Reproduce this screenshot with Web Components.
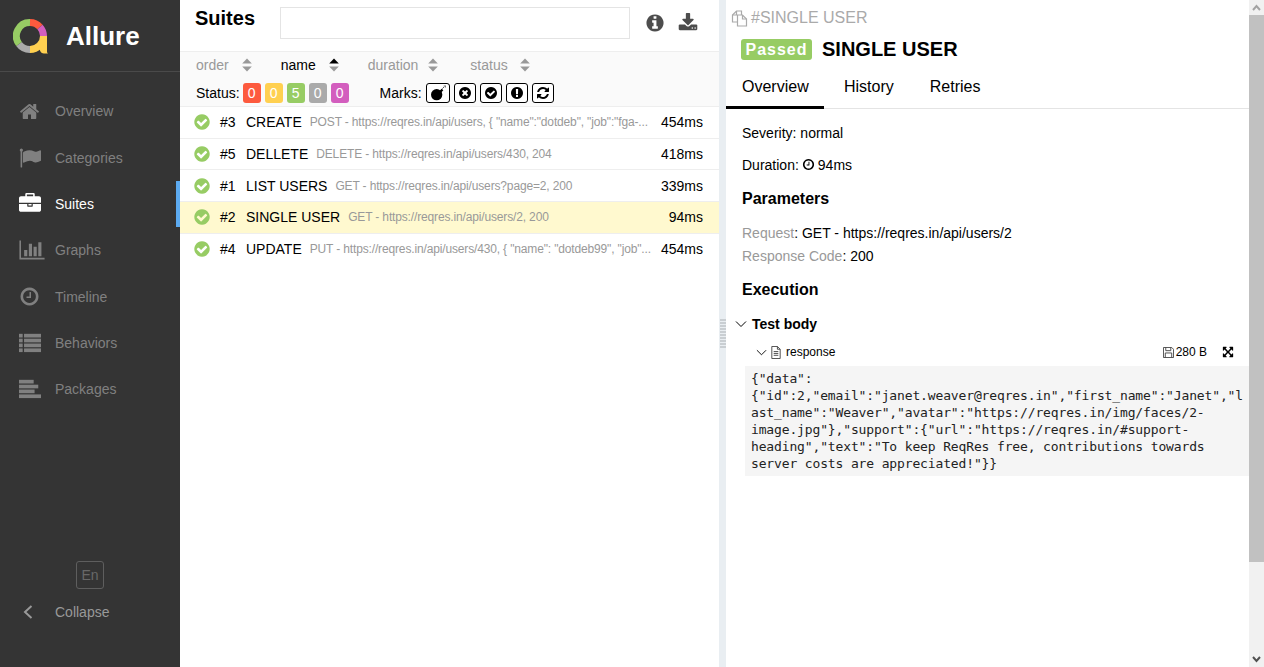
<!DOCTYPE html>
<html lang="en">
<head>
<meta charset="utf-8">
<title>Allure Report</title>
<style>
	html, body { margin: 0; height: 100%; overflow: hidden; }
	body { font-family: "Liberation Sans", Arial, sans-serif; font-size: 14px; color: #000; }
</style>
</head>
<body>
<allure-app>
	<allure-sidebar slot="side"></allure-sidebar>
	<suites-pane slot="tree"></suites-pane>
	<test-pane slot="detail"></test-pane>
</allure-app>

<script>
const RING = 'q0 209-103 385.5t-279.5 279.5-385.5 103-385.5-103-279.5-279.5-103-385.5 103-385.5 279.5-279.5 385.5-103 385.5 103 279.5 279.5 103 385.5z';

const ICONS = {
	home: ['0 0 1792 1792', '<path d="M1472 992v480q0 26-19 45t-45 19h-384v-384h-256v384h-384q-26 0-45-19t-19-45v-480q0-1 .5-3t.5-3l575-474 575 474q1 2 1 6zm223-69l-62 74q-8 9-21 11h-3q-13 0-21-7l-692-577-692 577q-12 8-24 7-13-2-21-11l-62-74q-8-10-7-23.5t11-22.5l719-599q32-26 76-26t76 26l244 204v-195q0-14 9-23t23-9h192q14 0 23 9t9 23v408l219 182q10 8 11 21.5t-7 23.5z"/>'],
	flag: ['0 0 1792 1792', '<path d="M320 256q0 72-64 110v1266q0 13-9.5 22.5t-22.5 9.5h-64q-13 0-22.5-9.5t-9.5-22.5v-1266q-64-38-64-110 0-53 37.5-90.5t90.5-37.5 90.5 37.5 37.5 90.5zm1472 64v763q0 25-12.5 38.5t-39.5 27.5q-215 116-369 116-61 0-123.5-22t-108.5-48-115.5-48-142.5-22q-192 0-464 146-17 9-33 9-26 0-45-19t-19-45v-742q0-32 31-55 21-14 79-43 236-120 421-120 107 0 200 29t219 88q38 19 88 19 54 0 117.5-21t110-47 88-47 54.5-21q26 0 45 19t19 45z"/>'],
	briefcase: ['0 0 1792 1792', '<path d="M640 256h512v-128h-512v128zm1152 640v480q0 66-47 113t-113 47h-1472q-66 0-113-47t-47-113v-480h672v160q0 26 19 45t45 19h320q26 0 45-19t19-45v-160h672zm-768 0v128h-256v-128h256zm768-480v384h-1792v-384q0-66 47-113t113-47h352v-160q0-40 28-68t68-28h576q40 0 68 28t28 68v160h352q66 0 113 47t47 113z"/>'],
	chart: ['0 0 2048 1792', '<path d="M640 896v512h-256v-512h256zm384-512v1024h-256v-1024h256zm1024 1152v128h-2048v-1536h128v1408h1920zm-640-896v768h-256v-768h256zm384-384v1152h-256v-1152h256z"/>'],
	clock: ['0 0 1792 1792', '<path d="M1024 544v448q0 14-9 23t-23 9h-320q-14 0-23-9t-9-23v-64q0-14 9-23t23-9h224v-352q0-14 9-23t23-9h64q14 0 23 9t9 23zm416 352q0-148-73-273t-198-198-273-73-273 73-198 198-73 273 73 273 198 198 273 73 273-73 198-198 73-273zm224 0' + RING + '"/>'],
	list: ['0 0 24 24', '<rect x="0" y="2" width="4" height="4"/><rect x="0" y="7.3" width="4" height="4"/><rect x="0" y="12.6" width="4" height="4"/><rect x="0" y="17.9" width="4" height="4"/><rect x="5.5" y="2" width="18.5" height="4"/><rect x="5.5" y="7.3" width="18.5" height="4"/><rect x="5.5" y="12.6" width="18.5" height="4"/><rect x="5.5" y="17.9" width="18.5" height="4"/>'],
	bars: ['0 0 24 24', '<rect x="0" y="2" width="16" height="4"/><rect x="0" y="7.3" width="21" height="4"/><rect x="0" y="12.6" width="17" height="4"/><rect x="0" y="17.9" width="24" height="4"/>'],
	check: ['0 0 1792 1792', '<path d="M1412 734q0-28-18-46l-91-90q-19-19-45-19t-45 19l-408 407-226-226q-19-19-45-19t-45 19l-91 90q-18 18-18 46 0 27 18 45l362 362q19 19 45 19 27 0 46-19l543-543q18-18 18-45zm252 162' + RING + '"/>'],
	times: ['0 0 1792 1792', '<path d="M1277 1122q0-26-19-45l-181-181 181-181q19-19 19-45 0-27-19-46l-90-90q-19-19-46-19-26 0-45 19l-181 181-181-181q-19-19-45-19-27 0-46 19l-90 90q-19 19-19 46 0 26 19 45l181 181-181 181q-19 19-19 45 0 27 19 46l90 90q19 19 46 19 26 0 45-19l181-181 181 181q19 19 45 19 27 0 46-19l90-90q19-19 19-46zm387-226' + RING + '"/>'],
	exclamation: ['0 0 1792 1792', '<path d="M896 128q209 0 385.5 103t279.5 279.5 103 385.5-103 385.5-279.5 279.5-385.5 103-385.5-103-279.5-279.5-103-385.5 103-385.5 279.5-279.5 385.5-103zm128 1247v-190q0-14-9-23.5t-22-9.5h-192q-13 0-23 10t-10 23v190q0 13 10 23t23 10h192q13 0 22-9.5t9-23.5zm-2-344l18-621q0-12-10-18-10-8-24-8h-220q-14 0-24 8-10 6-10 18l17 621q0 10 10 17.5t24 7.5h185q14 0 23.5-7.5t10.5-17.5z"/>'],
	info: ['0 0 1792 1792', '<path d="M1152 1376v-160q0-14-9-23t-23-9h-96v-512q0-14-9-23t-23-9h-320q-14 0-23 9t-9 23v160q0 14 9 23t23 9h96v320h-96q-14 0-23 9t-9 23v160q0 14 9 23t23 9h448q14 0 23-9t9-23zm-128-896v-160q0-14-9-23t-23-9h-192q-14 0-23 9t-9 23v160q0 14 9 23t23 9h192q14 0 23-9t9-23zm640 416' + RING + '"/>'],
	refresh: ['0 0 1792 1792', '<path d="M1639 1056q0 5-1 7-64 268-268 434.5t-478 166.5q-146 0-282.5-55t-243.5-157l-129 129q-19 19-45 19t-45-19-19-45v-448q0-26 19-45t45-19h448q26 0 45 19t19 45-19 45l-137 137q71 66 161 102t187 36q134 0 250-65t186-179q11-17 53-117 8-23 30-23h192q13 0 22.5 9.5t9.5 22.5zm25-800v448q0 26-19 45t-45 19h-448q-26 0-45-19t-19-45 19-45l138-138q-148-137-349-137-134 0-250 65t-186 179q-11 17-53 117-8 23-30 23h-199q-13 0-22.5-9.5t-9.5-22.5v-7q65-268 270-434.5t480-166.5q146 0 284 55.5t245 156.5l130-129q19-19 45-19t45 19 19 45z"/>'],
	download: ['0 0 1792 1792', '<path d="M1344 1344q0-26-19-45t-45-19-45 19-19 45 19 45 45 19 45-19 19-45zm256 0q0-26-19-45t-45-19-45 19-19 45 19 45 45 19 45-19 19-45zm128-224v320q0 40-28 68t-68 28h-1472q-40 0-68-28t-28-68v-320q0-40 28-68t68-28h465l135 136q58 56 136 56t136-56l136-136h464q40 0 68 28t28 68zm-325-569q17 41-14 70l-448 448q-18 19-45 19t-45-19l-448-448q-31-29-14-70 17-39 59-39h256v-448q0-26 19-45t45-19h256q26 0 45 19t19 45v448h256q42 0 59 39z"/>'],
	expand: ['0 0 1792 1792', '<path d="M1411 541l-355 355 355 355 144-144q29-31 70-14 39 17 39 59v448q0 26-19 45t-45 19h-448q-42 0-59-40-17-39 14-69l144-144-355-355-355 355 144 144q31 30 14 69-17 40-59 40h-448q-26 0-45-19t-19-45v-448q0-42 40-59 39-17 69 14l144 144 355-355-355-355-144 144q-19 19-45 19-12 0-24-5-40-17-40-59v-448q0-26 19-45t45-19h448q42 0 59 40 17 39-14 69l-144 144 355 355 355-355-144-144q-31-30-14-69 17-40 59-40h448q26 0 45 19t19 45v448q0 42-39 59-13 5-25 5-26 0-45-19z"/>'],
	bomb: ['0 0 24 24', '<circle cx="10" cy="14.5" r="8.5"/><path d="M14 9l3.500-3.500 2.500 2.500-3.500 3.500z"/><path d="M18.500 5.500L21 3" fill="none" stroke="currentColor" stroke-width="1"/><path d="M20.500 1.500h3M23 1v3" fill="none" stroke="currentColor" stroke-width=".8"/>'],
	sort: ['0 0 10 14', '<path d="M5 0.500L9.800 5.500H.2z"/><path d="M5 13.500L9.800 8.500H.2z" class="down"/>'],
	chevronDown: ['0 0 12 12', '<path d="M1 3.500L6 8.500L11 3.500" fill="none" stroke="currentColor" stroke-width="1"/>'],
	angleLeft: ['0 0 12 16', '<path d="M9.500 2L3 8L9.500 14" fill="none" stroke="currentColor" stroke-width="2"/>'],
	copy: ['0 0 17 17', '<g fill="none" stroke="currentColor" stroke-width="1.200"><path d="M6.500 12H1.500V5L5.500 1H10.500V5"/><path d="M1.500 5H5.500V1"/><path d="M6.500 5H11.500L15.500 9V16H6.500Z"/><path d="M11.500 5V9H15.500"/></g>'],
	file: ['0 0 12 14', '<g fill="none" stroke="currentColor" stroke-width="1"><path d="M1.500 .5h6l3 3v10h-9z"/><path d="M7.500 .5v3h3"/><path d="M3.500 6h5M3.500 8h5M3.500 10h5"/></g>'],
	save: ['0 0 12 12', '<g fill="none" stroke="currentColor" stroke-width="1"><path d="M.5 .5h9l2 2v9h-11z"/><path d="M3 .5v3.500h5.500V.5"/><path d="M2.500 11.500V6.500h7v5"/></g>']
};

class UxIcon extends HTMLElement {
	constructor() {
		super();
		this.attachShadow({ mode: 'open' });
	}

	connectedCallback() {
		const [box, body] = ICONS[this.getAttribute('name')];
		const size = this.getAttribute('size') || '14';
		const high = this.getAttribute('high') || size;

		this.shadowRoot.innerHTML = `
			<style>
				:host { display: inline-flex; flex: none; color: inherit; line-height: 0; }
				svg { width: ${size}px; height: ${high}px; fill: currentColor; display: block; }
				.down { fill: var(--sort-down, currentColor); }
			</style>
			<svg viewBox="${box}" preserveAspectRatio="xMidYMid meet">${body}</svg>
		`;
	}
}

class AllureLogo extends HTMLElement {
	constructor() {
		super();
		this.attachShadow({ mode: 'open' });
		this.shadowRoot.innerHTML = `
			<style>
				:host { display: block; width: 35px; height: 35px; flex: none; }
				svg { display: block; }
			</style>
			<svg width="35" height="35" viewBox="0 0 35 35">
				<g fill="none" stroke-width="7">
					<path d="M17 3.500A13.500 13.500 0 0 1 27 8" stroke="#fd5a3e"/>
					<path d="M27 8A13.500 13.500 0 0 1 30.500 17" stroke="#d35ebe"/>
					<path d="M30.500 17A13.500 13.500 0 0 1 17 30.500" stroke="#ffd050"/>
					<path d="M17 30.500A13.500 13.500 0 0 1 6 25" stroke="#aaaaaa"/>
					<path d="M6 25A13.500 13.500 0 0 1 17 3.500" stroke="#97cc64"/>
				</g>
				<path d="M27 17h7v15.500q0 1.500 1 2h-4q-3 0-4-3z" fill="#ffd050"/>
			</svg>
		`;
	}
}

class AllureNavItem extends HTMLElement {
	constructor() {
		super();
		this.attachShadow({ mode: 'open' });
		this.shadowRoot.innerHTML = `
			<style>
				:host { display: flex; align-items: center; height: 46.300px; box-sizing: border-box; padding-left: 19px; color: #808080; font-size: 14px; }
				:host([active]) { color: #fff; border-right: 4px solid #5caaf0; }
				.icon { width: 36px; display: flex; flex: none; }
			</style>
			<span class="icon"><slot name="icon"></slot></span>
			<slot></slot>
		`;
	}
}

class AllureSidebar extends HTMLElement {
	constructor() {
		super();
		this.attachShadow({ mode: 'open' });
		this.shadowRoot.innerHTML = `
			<style>
				:host { display: flex; flex-direction: column; width: 180px; flex: none; height: 100%; background: #343434; box-sizing: border-box; }
				.brand { display: flex; align-items: center; gap: 18px; height: 72px; box-sizing: border-box; padding: 2px 0 0 13px; border-bottom: 1px solid #4a4a4a; color: #fff; font-size: 26px; font-weight: 700; flex: none; }
				nav { padding-top: 16px; flex: 1; }
				.lang { align-self: center; width: 28px; height: 28px; box-sizing: border-box; border: 1px solid #5e5e5e; border-radius: 3px; color: #686868; display: flex; align-items: center; justify-content: center; font-size: 14px; }
				.collapse { display: flex; align-items: center; height: 46px; padding-left: 22px; color: #999; font-size: 14px; margin-bottom: 32px; }
				.collapse ux-icon { margin-right: 21px; }
			</style>
			<div class="brand"><allure-logo></allure-logo><span>Allure</span></div>
			<nav>
				<allure-nav-item><ux-icon slot="icon" name="home" size="21"></ux-icon>Overview</allure-nav-item>
				<allure-nav-item style="margin-top:.4px"><ux-icon slot="icon" name="flag" size="22"></ux-icon>Categories</allure-nav-item>
				<allure-nav-item active><ux-icon slot="icon" name="briefcase" size="22" high="22"></ux-icon>Suites</allure-nav-item>
				<allure-nav-item><ux-icon slot="icon" name="chart" size="26" high="22"></ux-icon>Graphs</allure-nav-item>
				<allure-nav-item><ux-icon slot="icon" name="clock" size="21"></ux-icon>Timeline</allure-nav-item>
				<allure-nav-item><ux-icon slot="icon" name="list" size="22"></ux-icon>Behaviors</allure-nav-item>
				<allure-nav-item><ux-icon slot="icon" name="bars" size="22"></ux-icon>Packages</allure-nav-item>
			</nav>
			<div class="lang">En</div>
			<div class="collapse"><ux-icon name="angleLeft" size="12" high="16"></ux-icon>Collapse</div>
		`;
	}
}

class SortItem extends HTMLElement {
	constructor() {
		super();
		this.attachShadow({ mode: 'open' });
		this.shadowRoot.innerHTML = `
			<style>
				:host { display: inline-flex; align-items: center; gap: 13px; color: #999; font-size: 14px; }
				:host([active]) { color: #000; --sort-down: #999; }
			</style>
			<slot></slot><ux-icon name="sort" size="10" high="14"></ux-icon>
		`;
	}
}

class SuiteRow extends HTMLElement {
	constructor() {
		super();
		this.attachShadow({ mode: 'open' });
	}

	connectedCallback() {
		this.shadowRoot.innerHTML = `
			<style>
				:host { display: flex; align-items: center; height: 31.660px; box-sizing: border-box; border-bottom: 1px solid #eee; padding: 0 16px 0 13px; font-size: 14px; color: #000; white-space: nowrap; }
				:host([selected]) { background: #fff9cf; }
				ux-icon { color: #97cc64; margin-right: 9px; }
				.num { width: 26px; flex: none; }
				.sub { color: #999; font-size: 12px; letter-spacing: -.15px; margin-left: 8px; flex: 1; min-width: 0; }
				.time { flex: none; margin-left: 4px; }
			</style>
			<ux-icon name="check" size="18"></ux-icon>
			<span class="num">${this.getAttribute('num')}</span>
			<span class="name">${this.getAttribute('label')}</span>
			<span class="sub">${this.getAttribute('sub')}</span>
			<span class="time">${this.getAttribute('time')}</span>
		`;
	}
}

class SuitesPane extends HTMLElement {
	constructor() {
		super();
		this.attachShadow({ mode: 'open' });
		this.shadowRoot.innerHTML = `
			<style>
				:host { display: flex; flex-direction: column; flex: none; width: 539px; height: 100%; background: #fff; overflow: hidden; }
				.head { display: flex; align-items: center; height: 51px; box-sizing: border-box; padding: 0 21px 5px 15px; flex: none; }
				h2 { margin: 0 0 10px; width: 85px; font-size: 20px; font-weight: 700; }
				.search { width: 350px; height: 32px; box-sizing: border-box; border: 1px solid #e4e4e4; background: #fff; }
				.head ux-icon { color: #4d4d4d; }
				.info { margin-left: 15px; }
				.dl { margin-left: 13px; }
				.tools { flex: none; height: 56px; box-sizing: border-box; background: #fafafa; border-top: 1px solid #eee; border-bottom: 1px solid #eee; padding: 4px 0 0 16px; }
				.sorts { display: flex; gap: 29px; height: 17px; align-items: center; }
				.filters { display: flex; align-items: center; margin-top: 10px; font-size: 14px; }
				.badge { width: 18px; height: 20px; border-radius: 3px; color: #fff; display: flex; align-items: center; justify-content: center; font-size: 14px; margin-right: 4px; }
				.status { margin-right: 3px; }
				.marks { margin: 0 4px 0 27px; }
				.mark { height: 20px; width: 22px; box-sizing: border-box; border: 1px solid #000; border-radius: 3px; display: flex; align-items: center; justify-content: center; margin-right: 4px; background: #fff; color: #000; }
				.mark.wide { width: 24px; }
			</style>
			<div class="head">
				<h2>Suites</h2>
				<div class="search"></div>
				<ux-icon class="info" name="info" size="20"></ux-icon>
				<ux-icon class="dl" name="download" size="20"></ux-icon>
			</div>
			<div class="tools">
				<div class="sorts">
					<sort-item>order</sort-item>
					<sort-item active>name</sort-item>
					<sort-item style="gap:10px;margin-right:3px">duration</sort-item>
					<sort-item style="gap:12px">status</sort-item>
				</div>
				<div class="filters">
					<span class="status">Status:</span>
					<span class="badge" style="background:#fd5a3e">0</span>
					<span class="badge" style="background:#ffd050">0</span>
					<span class="badge" style="background:#97cc64">5</span>
					<span class="badge" style="background:#aaa">0</span>
					<span class="badge" style="background:#d35ebe">0</span>
					<span class="marks">Marks:</span>
					<span class="mark wide"><ux-icon name="bomb" size="16"></ux-icon></span>
					<span class="mark"><ux-icon name="times" size="14"></ux-icon></span>
					<span class="mark"><ux-icon name="check" size="14"></ux-icon></span>
					<span class="mark"><ux-icon name="exclamation" size="14"></ux-icon></span>
					<span class="mark"><ux-icon name="refresh" size="14"></ux-icon></span>
				</div>
			</div>
			<suite-row num="#3" label="CREATE" time="454ms" sub="POST - https://reqres.in/api/users, { &quot;name&quot;:&quot;dotdeb&quot;, &quot;job&quot;:&quot;fga-..."></suite-row>
			<suite-row num="#5" label="DELLETE" time="418ms" sub="DELETE - https://reqres.in/api/users/430, 204"></suite-row>
			<suite-row num="#1" label="LIST USERS" time="339ms" sub="GET - https://reqres.in/api/users?page=2, 200"></suite-row>
			<suite-row num="#2" label="SINGLE USER" time="94ms" selected sub="GET - https://reqres.in/api/users/2, 200"></suite-row>
			<suite-row num="#4" label="UPDATE" time="454ms" style="border-bottom:0" sub="PUT - https://reqres.in/api/users/430, { &quot;name&quot;: &quot;dotdeb99&quot;, &quot;job&quot;..."></suite-row>
		`;
	}
}

class PaneSplitter extends HTMLElement {
	constructor() {
		super();
		this.attachShadow({ mode: 'open' });
		this.shadowRoot.innerHTML = `
			<style>
				:host { display: flex; align-items: center; justify-content: center; flex: none; width: 7px; height: 100%; background: #e9eef2; }
				.grip { width: 6px; height: 30px; background-image: radial-gradient(circle at 1px 1px, #c9ced2 1px, transparent 1.300px); background-size: 2px 3px; }
			</style>
			<div class="grip"></div>
		`;
	}
}

class FakeScrollbar extends HTMLElement {
	constructor() {
		super();
		this.attachShadow({ mode: 'open' });
		this.shadowRoot.innerHTML = `
			<style>
				:host { display: flex; flex-direction: column; flex: none; width: 15px; height: 100%; background: #f1f1f1; }
				.btn { height: 15px; display: flex; align-items: center; justify-content: center; flex: none; color: #a3a3a3; }
				.thumb { height: 547px; background: #c1c1c1; flex: none; }
				.track { flex: 1; }
				.btn.end { color: #505050; }
				svg { width: 9px; height: 7px; fill: none; stroke: currentColor; stroke-width: 2; }
			</style>
			<div class="btn"><svg viewBox="0 0 9 7"><path d="M1 6L4.500 2L8 6"/></svg></div>
			<div class="thumb"></div>
			<div class="track"></div>
			<div class="btn end"><svg viewBox="0 0 9 7"><path d="M1 1L4.500 5L8 1"/></svg></div>
		`;
	}
}

class TestPane extends HTMLElement {
	constructor() {
		super();
		this.attachShadow({ mode: 'open' });
		this.shadowRoot.innerHTML = `
			<style>
				:host { display: block; flex: 1; min-width: 0; height: 100%; overflow: hidden; background: #fff; font-size: 14px; color: #000; }
				.uid { display: flex; align-items: center; gap: 3px; height: 18px; margin: 9px 0 0 5px; color: #aaa; font-size: 16px; }
				.title { display: flex; align-items: center; margin: 4px 0 0 15px; height: 36px; }
				.passed { width: 71px; height: 21px; margin-top: 1px; border-radius: 3px; background: #97cc64; color: #fff; font-size: 16px; font-weight: 700; letter-spacing: 1px; display: flex; align-items: center; justify-content: center; margin-right: 10px; }
				h2 { margin: 0; font-size: 20px; font-weight: 700; }
				.tabs { display: flex; height: 42px; box-sizing: border-box; border-bottom: 1px solid #e4e4e4; font-size: 16px; }
				.tab { display: flex; align-items: center; padding-bottom: 2px; margin-left: 36px; height: 42px; box-sizing: border-box; }
				.tab.on { margin: 0 -16px 0 0; width: 98px; padding-left: 16px; border-bottom: 3px solid #000; padding-bottom: 0; }
				.body { padding: 0 15px 0 16px; }
				p { margin: 0; height: 23px; display: flex; align-items: center; gap: 3px; }
				.k { color: #999; }
				h3 { margin: 0; font-size: 16px; font-weight: 700; height: 20px; display: flex; align-items: center; }
				.step { display: flex; align-items: center; font-weight: 700; height: 20px; margin: 14px 0 0 -7px; }
				.step ux-icon { margin-right: 5px; }
				.att { display: flex; align-items: center; height: 18px; margin: 9px 0 0 14px; font-size: 12px; }
				.att .doc { color: #444; margin: 0 4px 0 3px; }
				.size { margin-left: auto; display: flex; align-items: center; gap: 2px; margin-right: 15px; }
				.size ux-icon { color: #444; }
				pre { margin: 5px -15px 0 3px; padding: 4px 0 5px 6px; background: #f5f5f5; font: 13px/17px "DejaVu Sans Mono", monospace; letter-spacing: -.14px; white-space: pre; overflow: hidden; height: 101px; color: #222; }
			</style>
			<div class="uid"><ux-icon name="copy" size="17"></ux-icon>#SINGLE USER</div>
			<div class="title"><span class="passed">Passed</span><h2>SINGLE USER</h2></div>
			<div class="tabs">
				<div class="tab on">Overview</div>
				<div class="tab" style="margin-left:36px">History</div>
				<div class="tab">Retries</div>
			</div>
			<div class="body">
				<p style="margin-top:12px">Severity: normal</p>
				<p style="margin-top:9px">Duration: <ux-icon name="clock" size="13"></ux-icon> 94ms</p>
				<h3 style="margin-top:13px">Parameters</h3>
				<p style="margin-top:12px"><span><span class="k">Request</span>: GET - https://reqres.in/api/users/2</span></p>
				<p><span><span class="k">Response Code</span>: 200</span></p>
				<h3 style="margin-top:13px">Execution</h3>
				<div class="step"><ux-icon name="chevronDown" size="12"></ux-icon>Test body</div>
				<div class="att">
					<ux-icon name="chevronDown" size="11"></ux-icon>
					<ux-icon class="doc" name="file" size="12" high="13"></ux-icon>
					<span>response</span>
					<span class="size"><ux-icon name="save" size="11"></ux-icon>280 B</span>
					<ux-icon name="expand" size="12"></ux-icon>
				</div>
				<pre>{"data":
{"id":2,"email":"janet.weaver@reqres.in","first_name":"Janet","l
ast_name":"Weaver","avatar":"https://reqres.in/img/faces/2-
image.jpg"},"support":{"url":"https://reqres.in/#support-
heading","text":"To keep ReqRes free, contributions towards
server costs are appreciated!"}}</pre>
			</div>
		`;
	}
}

class AllureApp extends HTMLElement {
	constructor() {
		super();
		this.attachShadow({ mode: 'open' });
		this.shadowRoot.innerHTML = `
			<style>
				:host { display: flex; width: 100%; height: 667px; overflow: hidden; }
			</style>
			<slot name="side"></slot>
			<slot name="tree"></slot>
			<pane-splitter></pane-splitter>
			<slot name="detail"></slot>
			<fake-scrollbar></fake-scrollbar>
		`;
	}
}

customElements.define('ux-icon', UxIcon);
customElements.define('allure-logo', AllureLogo);
customElements.define('allure-nav-item', AllureNavItem);
customElements.define('allure-sidebar', AllureSidebar);
customElements.define('sort-item', SortItem);
customElements.define('suite-row', SuiteRow);
customElements.define('suites-pane', SuitesPane);
customElements.define('pane-splitter', PaneSplitter);
customElements.define('fake-scrollbar', FakeScrollbar);
customElements.define('test-pane', TestPane);
customElements.define('allure-app', AllureApp);
</script>
</body>
</html>
